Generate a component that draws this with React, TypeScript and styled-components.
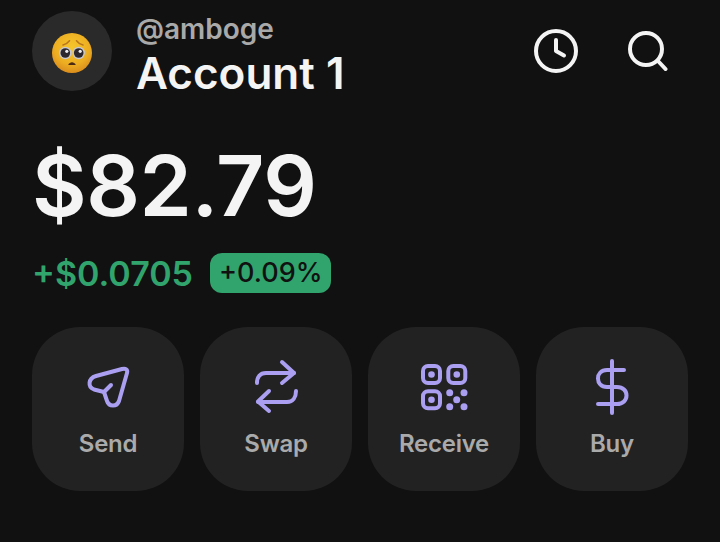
import React from "react";
import styled, { createGlobalStyle } from "styled-components";

const Global = createGlobalStyle`
  html, body { margin: 0; padding: 0; background: #111111; }
  body { font-family: Inter, "Liberation Sans", sans-serif; }
`;

const Page = styled.div`
  width: 720px;
  height: 542px;
  overflow: hidden;
  background: #111111;
  padding: 11px 32px 0;
  box-sizing: border-box;
`;

const Header = styled.header`
  display: flex;
  align-items: center;
  height: 80px;
`;

const Avatar = styled.div`
  width: 80px;
  height: 80px;
  border-radius: 50%;
  background: #2a2a2a;
  display: flex;
  align-items: center;
  justify-content: center;
  flex: none;
  padding-top: 4px;
  box-sizing: border-box;
`;

const Identity = styled.div`
  display: flex;
  flex-direction: column;
  margin: 8px 0 0 24px;
  flex: 1;
`;

const Handle = styled.div`
  font-size: 28px;
  line-height: 36px;
  font-weight: 600;
  color: #a9a9a9;
`;

const AccountName = styled.div`
  font-size: 44px;
  line-height: 52px;
  font-weight: 600;
  color: #f4f4f4;
`;

const HeaderIcons = styled.div`
  display: flex;
  align-items: center;
  gap: 50px;
  margin-right: 20px;
`;

const Balance = styled.div`
  font-size: 84px;
  line-height: 106px;
  font-weight: 600;
  letter-spacing: -0.4px;
  color: #f4f4f4;
  margin-top: 42px;
`;

const ChangeRow = styled.div`
  display: flex;
  align-items: center;
  gap: 17px;
  margin-top: 14px;
  height: 40px;
`;

const ChangeAmount = styled.div`
  font-size: 34px;
  font-weight: 600;
  color: #30a46c;
`;

const ChangeBadge = styled.div`
  background: #30a46c;
  color: #111111;
  font-size: 27px;
  font-weight: 500;
  height: 40px;
  line-height: 40px;
  padding: 0 9px;
  border-radius: 12px;
`;

const Actions = styled.div`
  display: grid;
  grid-template-columns: repeat(4, 152px);
  gap: 16px;
  margin-top: 34px;
`;

const Action = styled.div`
  height: 164px;
  border-radius: 48px;
  background: #222222;
  display: flex;
  flex-direction: column;
  align-items: center;
  padding-top: 36px;
  box-sizing: border-box;
`;

const IconSlot = styled.div`
  height: 48px;
  display: flex;
  align-items: center;
  justify-content: center;
`;

const ActionLabel = styled.div`
  font-size: 24px;
  line-height: 32px;
  font-weight: 600;
  letter-spacing: -0.25px;
  color: #aaaaaa;
  margin-top: 17px;
`;

const Stroke = styled.svg<{ $color?: string }>`
  display: block;
  flex: none;
  fill: none;
  stroke: ${(p) => p.$color ?? "#ab9ff2"};
  stroke-width: 4;
  stroke-linecap: round;
  stroke-linejoin: round;
`;

const Emoji = () => (
  <svg width="40" height="40" viewBox="0 0 40 40">
    <defs>
      <radialGradient id="face" cx="50%" cy="36%" r="66%">
        <stop offset="0%" stopColor="#f5c62c" />
        <stop offset="65%" stopColor="#edae22" />
        <stop offset="100%" stopColor="#d98a1c" />
      </radialGradient>
    </defs>
    <circle cx="20" cy="20" r="20" fill="url(#face)" />
    <path d="M11 12 Q15 11 17.500 7.700" fill="none" stroke="#b9761c" strokeWidth="1.500" strokeLinecap="round" />
    <path d="M24.500 7.700 Q27 11 31 12" fill="none" stroke="#b9761c" strokeWidth="1.500" strokeLinecap="round" />
    <circle cx="13.300" cy="20" r="6.200" fill="#c8c8d0" />
    <circle cx="26.700" cy="20" r="6.200" fill="#c8c8d0" />
    <circle cx="13.300" cy="20" r="4.800" fill="#2c282e" />
    <circle cx="26.700" cy="20" r="4.800" fill="#2c282e" />
    <circle cx="14.800" cy="18.300" r="1.600" fill="#ecedf2" />
    <circle cx="28.200" cy="18.300" r="1.600" fill="#ecedf2" />
    <path d="M17 31.500 Q20 28 23 31.500 Z" fill="#4a2a14" stroke="#4a2a14" strokeWidth="1.200" strokeLinejoin="round" />
  </svg>
);

const ClockIcon = () => (
  <Stroke $color="#f4f4f4" width="44" height="44" viewBox="0 0 44 44">
    <circle cx="22" cy="22" r="20" />
    <path d="M22 11 V22 L30 26.500" />
  </Stroke>
);

const SearchIcon = () => (
  <Stroke $color="#f4f4f4" width="40" height="40" viewBox="0 0 40 40">
    <circle cx="18" cy="18" r="16" />
    <path d="M30 30 L37.500 38" />
  </Stroke>
);

const SendIcon = () => (
  <Stroke width="48" height="48" viewBox="0 0 48 48">
    <path d="M38 6 L12 13 C4 15.500 3.500 24 10 26.500 L20 29 L23 38 C25 44 33 44 35 38 L43 10 C44 6.500 41.500 5 38 6 Z" />
    <path d="M20 29 L27 22" />
  </Stroke>
);

const SwapIcon = () => (
  <Stroke width="48" height="56" viewBox="0 0 48 56">
    <path d="M5 24 C5 18 8 14 14 14 H42" />
    <path d="M30 3 L42 14 L30 24" />
    <path d="M44 32 C44 38 41 43 35 43 H6" />
    <path d="M17 32 L6 42.500 L17 52" />
  </Stroke>
);

const ReceiveIcon = () => (
  <svg width="48" height="48" viewBox="0 0 48 48" style={{ display: "block" }}>
    <g fill="none" stroke="#ab9ff2" strokeWidth="4">
      <rect x="3" y="3" width="17" height="17" rx="5" />
      <rect x="28.300" y="3" width="17" height="17" rx="5" />
      <rect x="3" y="28.300" width="17" height="17" rx="5" />
    </g>
    <g fill="#ab9ff2">
      <circle cx="11.500" cy="11.500" r="3.300" />
      <circle cx="36.800" cy="11.500" r="3.300" />
      <circle cx="11.500" cy="36.800" r="3.300" />
      <circle cx="29.700" cy="29.700" r="3.500" />
      <circle cx="44" cy="29.700" r="3.500" />
      <circle cx="36.700" cy="36.700" r="3.500" />
      <circle cx="29.700" cy="43.700" r="3.500" />
      <circle cx="44" cy="43.700" r="3.500" />
    </g>
  </svg>
);

const BuyIcon = () => (
  <Stroke width="48" height="56" viewBox="0 0 48 56">
    <path d="M24 2 V54" />
    <path d="M36 11 H19 C13 11 10 15 10 19.500 C10 24 13 28 19 28 H29 C35 28 38.500 32 38.500 36.500 C38.500 41 35 45 29 45 H10" />
  </Stroke>
);

const actions: { label: string; icon: React.ReactNode }[] = [
  { label: "Send", icon: <SendIcon /> },
  { label: "Swap", icon: <SwapIcon /> },
  { label: "Receive", icon: <ReceiveIcon /> },
  { label: "Buy", icon: <BuyIcon /> },
];

export default function App() {
  return (
    <Page>
      <Global />
      <Header>
        <Avatar>
          <Emoji />
        </Avatar>
        <Identity>
          <Handle>@amboge</Handle>
          <AccountName>Account 1</AccountName>
        </Identity>
        <HeaderIcons>
          <ClockIcon />
          <SearchIcon />
        </HeaderIcons>
      </Header>
      <Balance>$82.79</Balance>
      <ChangeRow>
        <ChangeAmount>+$0.0705</ChangeAmount>
        <ChangeBadge>+0.09%</ChangeBadge>
      </ChangeRow>
      <Actions>
        {actions.map((a) => (
          <Action key={a.label}>
            <IconSlot>{a.icon}</IconSlot>
            <ActionLabel>{a.label}</ActionLabel>
          </Action>
        ))}
      </Actions>
    </Page>
  );
}
